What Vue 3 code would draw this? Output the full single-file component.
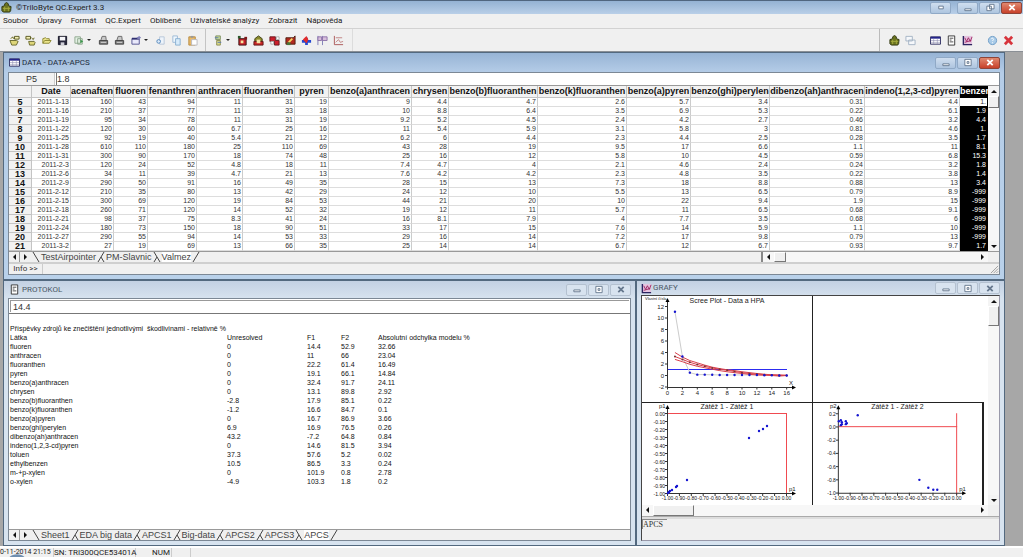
<script setup>
import { ref } from 'vue'

const menu = ['Soubor', 'Úpravy', 'Formát', 'QC.Expert', 'Oblíbené', 'Uživatelské analýzy', 'Zobrazit', 'Nápověda']

const icons = {
  bell: '<path d="M6 0.5 8 2v2l3 1-.5 4.500-1 1.500h-7L1 9.500 1 5l3-1V2z" fill="#6b7420" stroke="#2c320c"/><path d="M4 5v5M8 5v5M2 7h8" stroke="#a6ac3e"/>',
  open1: '<path d="M1 6h7l2 1-2 4H3z" fill="#ded67a" stroke="#66662c"/><path d="M2 4l2-2 1 2M6 1.500h5v3H6z" fill="#f3efb4" stroke="#55551c"/>',
  open2: '<path d="M4 7h6l1 1-1 3H5z" fill="#ded67a" stroke="#66662c"/><path d="M1 1.500h5v3H1zM7 3l2 2 1-2" fill="#f3efb4" stroke="#55551c"/>',
  open3: '<path d="M2 9V4l3-1 1 1h3v2M2 9l2-3h7L9 9z" fill="#ece58c" stroke="#8a8630"/>',
  save: '<path d="M1.500 1.500h9v9h-9z" fill="#26263a" stroke="#111122"/><path d="M3 2h6v4H3z" fill="#f5f5f8"/><path d="M4 8h4v3H4z" fill="#d0d0d8"/>',
  exp: '<path d="M1 2h6v7H1zM4 4h5v6H4z" fill="#e3f0e3" stroke="#8ba58b"/><path d="m7 5 3 2-3 2z" fill="#38974a"/>',
  print: '<path d="M3 6 4.500 1.500h4L9 6z" fill="#c8c8c8" stroke="#666"/><path d="M1.500 6h9v4h-9z" fill="#7c7c7c" stroke="#444"/><path d="M3 8h6" stroke="#ddd"/>',
  props: '<path d="M1 4h8v6H1z" fill="#e9e9fb" stroke="#50508e"/><path d="M1 4h8" stroke="#303070" stroke-width="2"/><path d="m6 3 3-2 2 2-3 2z" fill="#8080b8"/>',
  cut: '<path d="M5 2h5v8H5z" fill="#eef4fb" stroke="#b7c6d8"/><circle cx="4" cy="7" r="2" fill="#dbe9f8" stroke="#5588bb"/>',
  copy: '<path d="M2 1h5v7H2z" fill="#eef6fd" stroke="#9db9d5"/><path d="M5 4h5v7H5z" fill="#d7ebfb" stroke="#88aed0"/>',
  paste: '<path d="M2 2h7v9H2z" fill="#e8b968" stroke="#b88a40"/><path d="M4 1h3v2H4z" fill="#999"/><path d="M5 5h6v6H5z" fill="#fff" stroke="#b9b9c0"/>',
  filt: '<path d="M3 1h5v4H3z" fill="#c9dc9a" stroke="#7c8e60"/><path d="M4 6h4v5H4z" fill="#d9d98a" stroke="#8c8e50"/><path d="M2 3h4M5 8h4" stroke="#5875b0"/>',
  r1: '<path d="M1 1h3v3H1z" fill="#2d5a2d"/><path d="M2 4h8v7H2z" fill="#c42027" stroke="#3a1616"/><path d="M4 6h3v3H4z" fill="#f6e7a0"/><path d="M8 2h3v3H8z" fill="#7a1a1a"/>',
  r2: '<path d="m6 1 4 3v3H2V4z" fill="#8c8c2c" stroke="#3d3d10"/><path d="M1 7h10v4H1z" fill="#c92525" stroke="#5c1818"/><path d="M4 5h4v4H4z" fill="#f3e4a8"/>',
  r3: '<path d="M1 2h6v4h4v5H6V7H1z" fill="#cc1f2c" stroke="#66161c"/><path d="M2 7h3v3H2zM8 2h3v3H8z" fill="#fff" stroke="#aaa"/>',
  r4: '<path d="M1 3h8l2-2v9H1z" fill="#b32a20" stroke="#4c2010"/><path d="m4 8 4-4" stroke="#f6d560" stroke-width="2"/><path d="M2 8h4v3H2z" fill="#47743b"/>',
  r5: '<path d="M6 3v8M1 7h10" stroke="#2649d2" stroke-width="3"/><path d="m2 5 4-4 2 4-2 4z" fill="#e12c2c"/>',
  r6: '<path d="M1 1v10M6 1v10" stroke="#7d7db6"/><path d="M1 2h4v4H1zM6 2h5v4H6z" fill="#d7bedb" stroke="#8c72a8"/>',
  r7: '<path d="M1.500 1v9.500H11" fill="none" stroke="#a55"/><path d="m3 8 3-3 2 3 3-1M3 3h7" fill="none" stroke="#c08080"/>',
  casc: '<path d="M1 1.500h7v5H1zM4 5.500h7v5H4z" fill="#f6f8fb" stroke="#a3b2c4"/>',
  sheet: '<path d="M.5 2h11v8H.5z" fill="#fff" stroke="#27275c"/><path d="M1 3h10" stroke="#23238a" stroke-width="2"/><path d="M1 6h10M1 8h10M4 4v6M8 4v6" stroke="#8b8bb0" stroke-width=".6"/>',
  doc: '<path d="M2.500 1h7v10h-7z" fill="#fff" stroke="#333"/><path d="M4 3.500h4M4 5.500h2M4 7.500h4" stroke="#444"/>',
  graph: '<path d="M1 1h10v10H1z" fill="#e5c3df"/><path d="M1.500 1v9.500H11" fill="none" stroke="#2b2560" stroke-width="1.500"/><path d="m3 3 2 4 2-4 2 4 2-5M3 8l7-2" fill="none" stroke="#9c2360"/>',
  help: '<circle cx="6" cy="6" r="4.500" fill="#a9cbe8" stroke="#6f9cc6"/><path d="M4.500 4.500c1-2 3-.5 2.500.5L6 6.500M6 8v1" fill="none" stroke="#fff"/>',
  del: '<path d="m2 2 8 8M10 2l-8 8" stroke="#d7343c" stroke-width="3"/>'
}

const fileTools = [
  { id: 'open1', label: 'Otevřít' }, { id: 'open2', label: 'Přidat' }, { id: 'open3', label: 'Složka' }, { id: 'save', label: 'Uložit' },
  { id: 'exp', label: 'Export', drop: true }, { id: 'print', label: 'Tisk' }, { id: 'print', label: 'Náhled' },
  { id: 'props', label: 'Vlastnosti', drop: true }, { id: 'cut', label: 'Vyjmout' }, { id: 'copy', label: 'Kopírovat' }, { id: 'paste', label: 'Vložit' }
]
const statTools = ['r1', 'r2', 'r3', 'r4', 'r5', 'r6', 'r7']
const winTools = [['bell', 'casc'], ['sheet', 'doc', 'graph'], ['help', 'del']]

const cell = ref('1.8')
const protoCell = ref('14.4')

const columns = [
  ['Date', 39], ['acenaften', 43], ['fluoren', 34], ['fenanthren', 49], ['anthracen', 46], ['fluoranthen', 52], ['pyren', 34],
  ['benzo(a)anthracen', 83], ['chrysen', 37], ['benzo(b)fluoranthen', 89], ['benzo(k)fluoranthen', 89], ['benzo(a)pyren', 64],
  ['benzo(ghi)perylen', 79], ['dibenzo(ah)anthracen', 95], ['indeno(1,2,3-cd)pyren', 95]
]
const rows = `2011-1-13 160 43 94 11 31 19 9 4.4 4.7 2.6 5.7 3.4 0.31 4.4 1.
2011-1-16 210 37 77 11 33 18 10 8.8 6.4 3.5 6.9 5.3 0.22 6.1 1.9
2011-1-19 95 34 78 11 31 19 9.2 5.2 4.5 2.4 4.2 2.7 0.46 3.2 4.4
2011-1-22 120 30 60 6.7 25 16 11 5.4 5.9 3.1 5.8 3 0.81 4.6 1.
2011-1-25 92 19 40 5.4 21 12 6.2 6 4.4 2.3 4.4 2.5 0.28 3.5 1.7
2011-1-28 610 110 180 25 110 69 43 28 19 9.5 17 6.6 1.1 11 8.1
2011-1-31 300 90 170 18 74 48 25 16 12 5.8 10 4.5 0.59 6.8 15.3
2011-2-3 120 24 52 4.8 18 11 7.4 4.7 4 2.1 4.6 2.4 0.24 3.2 1.8
2011-2-6 34 11 39 4.7 21 13 7.6 4.2 4.2 2.3 4.8 3.5 0.22 3.8 1.4
2011-2-9 290 50 91 16 49 35 28 15 13 7.3 18 8.8 0.88 13 3.4
2011-2-12 210 35 80 13 42 29 24 12 10 5.5 13 6.5 0.79 8.9 -999
2011-2-15 300 69 120 19 84 53 44 21 20 10 22 9.4 1.9 15 -999
2011-2-18 260 71 120 14 52 32 19 12 11 5.7 11 6.5 0.68 9.1 -999
2011-2-21 98 37 75 8.3 41 24 16 8.1 7.9 4 7.7 3.5 0.68 6 -999
2011-2-24 180 73 150 18 90 51 33 17 15 7.6 14 5.9 1.1 10 -999
2011-2-27 290 55 94 14 53 33 29 16 14 7.2 17 9.8 0.79 13 -999
2011-3-2 27 19 69 13 66 35 25 14 14 6.7 12 6.7 0.93 9.7 1.7`.split('\n').map(r => r.split(' '))

const dataTabs = ['TestAirpointer', 'PM-Slavnic', 'Valmez']
const protoTabs = ['Sheet1', 'EDA big data', 'APCS1', 'Big-data', 'APCS2', 'APCS3', 'APCS']

const protocol = `fluoren 0 14.4 52.9 32.66
anthracen 0 11 66 23.04
fluoranthen 0 22.2 61.4 16.49
pyren 0 19.1 66.1 14.84
benzo(a)anthracen 0 32.4 91.7 24.11
chrysen 0 13.1 89.8 2.92
benzo(b)fluoranthen -2.8 17.9 85.1 0.22
benzo(k)fluoranthen -1.2 16.6 84.7 0.1
benzo(a)pyren 0 16.7 86.9 3.66
benzo(ghi)perylen 6.9 16.9 76.5 0.26
dibenzo(ah)anthracen 43.2 -7.2 64.8 0.84
indeno(1,2,3-cd)pyren 0 14.6 81.5 3.94
toluen 37.3 57.6 5.2 0.02
ethylbenzen 10.5 86.5 3.3 0.24
m-+p-xylen 0 101.9 0.8 2.78
o-xylen -4.9 103.3 1.8 0.2`.split('\n').map(r => r.split(' '))

const sx = v => 25.5 + v * 7.45
const sy = v => 79.5 - v * 5.75
const line = vals => vals.map((v, i) => `${sx(i + 1)},${sy(v)}`).join(' ')
const eigen = [11.1, 3.3, 0.5, 0.15, 0.15, 0.12, 0.1, 0.1, 0.1, 0.1, 0.08, 0.08, 0.05, 0.05, 0, 0]
const mid = [3.3, 2.8, 2.3, 1.9, 1.6, 1.3, 1.1, 0.9, 0.7, 0.5, 0.35, 0.25, 0.15, 0.1, 0.02, 0]
const upper = [4, 3.2, 2.6, 2.2, 1.8, 1.45, 1.2, 1, 0.85, 0.65, 0.5, 0.35, 0.22, 0.12, 0.1, 0.05]
const lower = [2.8, 2.4, 1.95, 1.6, 1.35, 1.1, 0.85, 0.65, 0.5, 0.35, 0.2, 0.1, 0.05, 0, -0.1, 0]
const screeY = [12, 10, 8, 6, 4, 2, 0, -2]
const screeX = [0, 2, 4, 6, 8, 10, 12, 14, 16]
const tenths = ['-1.00', '-0.90', '-0.80', '-0.70', '-0.60', '-0.50', '-0.40', '-0.30', '-0.20', '-0.10', '0.00']
const fifths = ['0.2', '0.0', '-0.2', '-0.4', '-0.6', '-0.8', '-1.0']
const load1 = [[45, 77], [107, 35], [117, 28], [121, 26], [125, 23], [35, 83], [34, 84], [30, 87], [28, 88], [27, 89], [26, 90]]
const load2 = [[45, 12], [26, 18], [28, 17], [29, 19], [29, 21], [28, 22], [33, 18], [34, 20], [33, 21], [107, 77], [116, 85], [121, 87], [125, 87]]
</script>

<template>
  <div class="app">
    <header class="titlebar main-title">
      <svg class="ico" viewBox="0 0 12 12" v-html="icons.bell"></svg>
      <h1>©TriloByte QC.Expert 3.3</h1>
      <div class="winbtns">
        <button class="wb extra" aria-label="Přepnout"><svg viewBox="0 0 20 10"><path d="M7.500 3.500h5v3h-5z" /></svg></button>
        <button class="wb" aria-label="Minimalizovat"><svg viewBox="0 0 20 10"><path d="M6.500 6.500h7v2h-7z" /></svg></button>
        <button class="wb" aria-label="Obnovit"><svg viewBox="0 0 20 10"><path d="M9.500 1.500h5v5h-5zM6.500 3.500h5v5h-5z" /></svg></button>
        <button class="wb close" aria-label="Zavřít"><svg viewBox="0 0 20 10"><path class="x" d="m7 2 6 6m0-6-6 6" /></svg></button>
      </div>
    </header>
    <nav class="menu">
      <button v-for="m in menu" :key="m">{{ m }}</button>
    </nav>
    <div class="toolbar">
      <div class="group files">
        <button v-for="t in fileTools" :key="t.label" :aria-label="t.label" :class="{ drop: t.drop }">
          <svg class="ico" viewBox="0 0 12 12" v-html="icons[t.id]"></svg><i v-if="t.drop"></i>
        </button>
      </div>
      <div class="group stats">
        <button class="drop" aria-label="Filtr"><svg class="ico" viewBox="0 0 12 12" v-html="icons.filt"></svg><i></i></button>
        <button v-for="t in statTools" :key="t" :aria-label="t"><svg class="ico" viewBox="0 0 12 12" v-html="icons[t]"></svg></button>
      </div>
      <div class="group wins">
        <span v-for="g in winTools" :key="g[0]">
          <button v-for="t in g" :key="t" :aria-label="t"><svg class="ico" viewBox="0 0 12 12" v-html="icons[t]"></svg></button>
        </span>
      </div>
    </div>

    <main class="desktop">
      <section class="win active data">
        <div class="titlebar">
          <svg class="ico" viewBox="0 0 12 12" v-html="icons.sheet"></svg>
          <h2>DATA - DATA-APCS</h2>
          <div class="winbtns">
            <button class="wb" aria-label="Minimalizovat"><svg viewBox="0 0 20 10"><path d="M6.500 6.500h7v2h-7z" /></svg></button>
            <button class="wb" aria-label="Maximalizovat"><svg viewBox="0 0 20 10"><path d="M6.500 1.500h7v7h-7zM9 4h2v2H9z" /></svg></button>
            <button class="wb close" aria-label="Zavřít"><svg viewBox="0 0 20 10"><path class="x" d="m7 2 6 6m0-6-6 6" /></svg></button>
          </div>
        </div>
        <div class="client">
          <div class="formula"><label for="cell">P5</label><input id="cell" v-model="cell"></div>
          <div class="sheet">
            <div class="grid">
              <table>
                <colgroup><col class="num"><col v-for="c in columns" :key="c[0]" :style="{ width: c[1] + 'px' }"><col></colgroup>
                <thead><tr><th></th><th v-for="c in columns" :key="c[0]">{{ c[0] }}</th><th class="sel">benzen</th></tr></thead>
                <tbody>
                  <tr v-for="(r, i) in rows" :key="i">
                    <th>{{ i + 5 }}</th>
                    <td v-for="(v, j) in r" :key="j" :class="{ sel: j === 15, cur: j === 15 && i === 0 }">{{ v }}</td>
                  </tr>
                </tbody>
              </table>
            </div>
            <div class="vbar"><button class="up" aria-label="Nahoru"></button><span class="thumb"></span><button class="down" aria-label="Dolů"></button></div>
          </div>
          <div class="tabrow">
            <div class="tabs">
              <button class="arr left" aria-label="Předchozí"></button><button class="arr right" aria-label="Další"></button>
              <svg class="sep" viewBox="0 0 10 10"><path d="m2 0 6 10" /></svg>
              <template v-for="(t, i) in dataTabs" :key="t">
                <button class="tab" :class="{ on: i === 2 }">{{ t }}</button>
                <svg class="sep" viewBox="0 0 10 10"><path :d="i === 2 ? 'M8 0 2 10' : i === 1 ? 'm2 0 6 10M5 5 2 10' : 'M8 0 2 10M5 5l3 5'" /></svg>
              </template>
            </div>
            <div class="hbar"><button class="arr left" aria-label="Vlevo"></button><span class="thumb"></span><button class="arr right" aria-label="Vpravo"></button></div>
            <span class="corner"></span>
          </div>
          <footer class="info"><button>Info &gt;&gt;</button><svg viewBox="0 0 10 10"><path d="M1 9 9 1M4 9l5-5M7 9l2-2" /></svg></footer>
        </div>
      </section>

      <div class="lower">
        <section class="win proto">
          <div class="titlebar">
            <svg class="ico" viewBox="0 0 12 12" v-html="icons.doc"></svg>
            <h2>PROTOKOL</h2>
            <div class="winbtns">
              <button class="wb" aria-label="Minimalizovat"><svg viewBox="0 0 20 10"><path d="M6.500 5.500h7v2h-7z" /></svg></button>
              <button class="wb" aria-label="Maximalizovat"><svg viewBox="0 0 20 10"><path d="M6.500 1.500h7v7h-7zM9 4h2v2H9z" /></svg></button>
              <button class="wb" aria-label="Zavřít"><svg viewBox="0 0 20 10"><path class="x" d="m7 2 6 6m0-6-6 6" /></svg></button>
            </div>
          </div>
          <div class="client">
            <div class="pinput"><input v-model="protoCell" aria-label="Hodnota buňky"></div>
            <div class="doc">
              <table>
                <caption>Příspěvky zdrojů ke znečištění jednotlivými&nbsp; škodlivinami - relativně %</caption>
                <colgroup><col class="c1"><col class="c2"><col class="c3"><col class="c4"><col></colgroup>
                <thead><tr><th>Látka</th><th>Unresolved</th><th>F1</th><th>F2</th><th>Absolutní odchylka modelu %</th></tr></thead>
                <tbody><tr v-for="r in protocol" :key="r[0]"><td v-for="(v, i) in r" :key="i">{{ v }}</td></tr></tbody>
              </table>
            </div>
            <div class="tabrow">
              <div class="tabs">
                <button class="arr left" aria-label="Předchozí"></button><button class="arr right" aria-label="Další"></button>
                <svg class="sep" viewBox="0 0 10 10"><path d="m2 0 6 10" /></svg>
                <template v-for="(t, i) in protoTabs" :key="t">
                  <button class="tab" :class="{ on: i === 6 }">{{ t }}</button>
                  <svg class="sep" viewBox="0 0 10 10"><path :d="i === 6 ? 'M8 0 2 10' : i === 5 ? 'm2 0 6 10M5 5 2 10' : 'M8 0 2 10M5 5l3 5'" /></svg>
                </template>
              </div>
            </div>
          </div>
        </section>

        <section class="win graphs">
          <div class="titlebar">
            <svg class="ico" viewBox="0 0 12 12" v-html="icons.graph"></svg>
            <h2>GRAFY</h2>
            <div class="winbtns">
              <button class="wb" aria-label="Minimalizovat"><svg viewBox="0 0 20 10"><path d="M6.500 5.500h7v2h-7z" /></svg></button>
              <button class="wb" aria-label="Maximalizovat"><svg viewBox="0 0 20 10"><path d="M6.500 1.500h7v7h-7zM9 4h2v2H9z" /></svg></button>
              <button class="wb" aria-label="Zavřít"><svg viewBox="0 0 20 10"><path class="x" d="m7 2 6 6m0-6-6 6" /></svg></button>
            </div>
          </div>
          <div class="client">
            <div class="gview">
              <div class="plots">
                <svg class="plot first" viewBox="0 0 170 106">
                  <text class="pt" x="85" y="7">Scree Plot - Data a HPA</text>
                  <text class="tiny" x="3" y="4">Vlastní čísla</text>
                  <path class="ax" d="M25.500 4v87.500H152" /><path d="m25.500 2-2 4h4zM154 91.500l-4-2v4z" />
                  <text class="lab" x="147" y="89">X</text>
                  <g v-for="v in screeY" :key="'y' + v"><path class="ax" :d="`M23 ${sy(v)}h2.500`" /><text class="lab e" x="22" :y="sy(v) + 2">{{ v }}</text></g>
                  <g v-for="v in screeX" :key="'x' + v"><path class="ax" :d="`M${sx(v)} 91v2.500`" /><text class="lab m" :x="sx(v)" y="99">{{ v }}</text></g>
                  <path class="blue" d="M26 73.500h119" />
                  <polyline class="gray" :points="line(eigen)" />
                  <polyline class="red" :points="line(upper)" /><polyline class="red" :points="line(mid)" /><polyline class="red" :points="line(lower)" />
                  <circle v-for="(v, i) in mid" :key="'m' + i" class="dk" :cx="sx(i + 1)" :cy="sy(v)" r="1" />
                  <circle v-for="(v, i) in eigen" :key="'e' + i" class="pb" :cx="sx(i + 1)" :cy="sy(v)" r="1.200" />
                </svg>
                <span></span>
                <svg class="plot" viewBox="0 0 170 102">
                  <text class="pt" x="85" y="6">Zátěž 1 - Zátěž 1</text>
                  <text class="lab" x="17" y="5">p1</text><text class="lab" x="147" y="88">p1</text>
                  <path class="ax" d="M25.500 4v86.500H152" /><path d="m25.500 2-2 4h4zM154 90.500l-4-2v4z" />
                  <path class="redl" d="M26 10.500h119" /><path class="redl" d="M144.500 10v82" />
                  <g v-for="(v, i) in tenths" :key="v">
                    <path class="ax" :d="`M23 ${90.5 - i * 8}h2.500M${25.5 + i * 11.9} 90v3`" />
                    <text class="small e" x="23" :y="92.5 - i * 8">{{ v }}</text><text class="small m" :x="25.5 + i * 11.9" y="97">{{ v }}</text>
                  </g>
                  <circle v-for="(p, i) in load1" :key="i" class="pb" :cx="p[0]" :cy="p[1]" r="1.200" />
                </svg>
                <svg class="plot last" viewBox="0 0 170 102">
                  <text class="pt" x="85" y="6">Zátěž 1 - Zátěž 2</text>
                  <text class="lab" x="17" y="5">p2</text><text class="lab" x="147" y="88">p1</text>
                  <path class="ax" d="M25.500 4v86.500H152" /><path d="m25.500 2-2 4h4zM154 90.500l-4-2v4z" />
                  <path class="redl" d="M26 23.500h119" /><path class="redl" d="M144.500 10v82" />
                  <g v-for="(v, i) in fifths" :key="v"><path class="ax" :d="`M23 ${10.5 + i * 13.3}h2.500`" /><text class="small e" x="23" :y="12.5 + i * 13.3">{{ v }}</text></g>
                  <g v-for="(v, i) in tenths" :key="v"><path class="ax" :d="`M${25.5 + i * 11.9} 90v3`" /><text class="small m" :x="25.5 + i * 11.9" y="97">{{ v }}</text></g>
                  <circle v-for="(p, i) in load2" :key="i" class="pb" :cx="p[0]" :cy="p[1]" r="1.200" />
                </svg>
              </div>
              <div class="vbar"><button class="up" aria-label="Nahoru"></button><span class="thumb tall"></span><button class="down" aria-label="Dolů"></button></div>
            </div>
            <div class="hbar wide"><button class="arr left" aria-label="Vlevo"></button><span class="thumb"></span><button class="arr right" aria-label="Vpravo"></button><span class="corner"></span></div>
            <div class="glist"><span>APCS</span></div>
          </div>
        </section>
      </div>
    </main>

    <footer class="status">
      <span class="s1">0-11-2014 21:15</span><span class="s2">SN: TRI300QCE53401A</span><span class="s3">NUM</span><span class="s4"></span>
      <svg class="orb" viewBox="0 0 20 4"><path d="M0 4C5-1 15-1 20 4z" /></svg>
    </footer>
  </div>
</template>

<style>
body { background: #f0f0f0; }
</style>

<style scoped>
* { box-sizing: border-box; }
.app {
  --ui: Roboto, "Open Sans", sans-serif;
  --sans: "Liberation Sans", Arial, sans-serif;
  display: flex; flex-direction: column; min-height: 100vh; overflow: hidden;
  font: 8px/10px var(--ui); color: #222; background: #f0f0f0;
}
button { border: 0; padding: 0; background: none; font: inherit; color: inherit; display: flex; align-items: center; justify-content: center; }
input { border: 0; outline: 0; padding: 0; font: inherit; color: inherit; min-width: 0; background: #fff; }
h1, h2 { margin: 0; font: inherit; white-space: nowrap; }
.ico { width: 11px; height: 11px; flex: none; }
svg { display: block; }

.titlebar { display: flex; align-items: center; }
.main-title { height: 14px; border-top: 1px solid #50667f; padding: 0 1px; gap: 4px; background: linear-gradient(#94b2d3, #b9cfe8); }
.winbtns { margin-left: auto; display: flex; gap: 1px; }
.wb { width: 21px; height: 12px; border: 1px solid #90a9c6; border-radius: 2px; background: linear-gradient(#cfdeef, #aec5df); }
.wb svg { width: 18px; height: 9px; }
.wb path { fill: #fff; stroke: #62758c; }
.wb .x { stroke: #66788e; stroke-width: 2; }
.wb.extra { margin-right: 5px; }
.wb.close { background: linear-gradient(#e0886f, #c8412a); border-color: #8e4438; }
.wb.close .x { stroke: #fff; }

.menu { display: flex; gap: 9px; height: 14px; padding-left: 3px; }
.toolbar { display: flex; height: 24px; border-top: 1px solid #d2d2d2; border-bottom: 1px solid #8a8f95; }
.group { display: flex; align-items: center; }
.group button { width: 16px; height: 16px; }
.group .drop { width: 25px; gap: 2px; }
.group i { border: 2px solid transparent; border-top-color: #222; border-bottom: 0; }
.files { width: 206px; padding-left: 6px; border-right: 1px solid #c4c4c4; }
.stats { width: 147px; padding-left: 3px; border-right: 1px solid #dcdcdc; }
.wins { margin-left: auto; padding: 0 7px 0 6px; border-left: 1px solid #bbb; gap: 9px; }
.wins span { display: flex; }

.desktop { flex: 1; display: flex; flex-direction: column; padding: 0 18px 0 3px; background: #a7a7a7; }
.win { display: flex; flex-direction: column; border: 1px solid #53697f; padding: 0 4px 4px; background: linear-gradient(#c3d1e3, #d7e3ef 18px); color: #4b5866; min-width: 0; }
.win.active { background: linear-gradient(#97b4d5, #b5cde8 20px, #b9d1ea); color: #1d2b3c; }
.win .titlebar { height: 19px; gap: 2px; padding-left: 1px; }
.proto .titlebar { height: 17px; }
.graphs .titlebar { height: 14px; padding-left: 0; gap: 1px; }
.win:not(.active) .wb { background: #d8e3ef; border-color: #b4c1d0; }
.client { flex: 1; display: flex; flex-direction: column; background: #fff; border: 1px solid #7c8895; color: #333; min-width: 0; }
.graphs .client { border-color: #444; border-right-color: #99a; border-bottom-color: #99a; }
.formula { display: flex; height: 13px; border-bottom: 1px solid #999; font: 9px/13px var(--sans); }
.formula label { width: 46px; text-align: center; background: #f2f2f2; border-right: 1px solid #ccc; margin-right: 1px; }
.formula input { flex: 1; border-left: 1px solid #777; }
.sheet { display: flex; }
.grid { flex: 1; min-width: 0; overflow: hidden; }
table { border-collapse: separate; border-spacing: 0; table-layout: fixed; }
.grid table { width: 100%; }
.num { width: 23px; }
.grid th { font: bold 9px/11px var(--sans); padding: 0; height: 12px; background: #f2f2f2; color: #111; border-right: 1px solid #c4c4c4; border-bottom: 1px solid #c4c4c4; white-space: nowrap; overflow: hidden; }
.grid tbody th { height: 9px; line-height: 8px; }
.grid td { height: 9px; font: 7px/8px var(--sans); text-align: right; padding: 0 1px; border-right: 1px solid #ccc; border-bottom: 1px solid #ddd; white-space: nowrap; overflow: hidden; }
.grid .sel { background: #000; color: #fff; border-color: #000; }
.grid th.sel { text-align: left; border-right: 0; }
.grid .cur { background: #fff; color: #333; }

.vbar { width: 11px; flex: none; display: flex; flex-direction: column; background: #f7f7f7; }
.vbar button { height: 10px; background: #f4f4f4; }
.vbar button::before, .arr::before { content: ""; border: 3px solid transparent; }
.up::before { border-bottom-color: #111 !important; border-top: 0 !important; }
.down { margin-top: auto; }
.down::before { border-top-color: #111 !important; border-bottom: 0 !important; }
.thumb { background: #f0f0f0; border: 1px solid #fff; border-right-color: #777; border-bottom-color: #777; height: 12px; }
.thumb.tall { height: 20px; }
.arr { width: 11px; height: 10px; flex: none; }
.arr.left::before { border-right-color: #111; border-left: 0; }
.arr.right::before { border-left-color: #111; border-right: 0; }

.tabrow { display: flex; height: 11px; border-top: 1px solid #999; background: #f0f0f0; font: 9px/10px var(--sans); }
.tabs { display: flex; flex: 1; }
.tabs .arr.left { border-right: 1px solid #999; }
.sep { width: 10px; height: 10px; flex: none; }
.sep path, .info path { fill: none; stroke: #444; }
.tab { color: #444; white-space: nowrap; }
.tab.on { background: #fff; }
.hbar { display: flex; width: 227px; background: #f7f7f7; border-left: 2px solid #888; }
.hbar .thumb { width: 12px; height: 10px; }
.hbar .arr.right { margin-left: auto; }
.corner { width: 11px; background: #f0f0f0; }
.info { display: flex; justify-content: space-between; height: 12px; border-top: 2px solid #cfcfcf; background: #f0f0f0; }
.info button { width: 34px; border-right: 1px solid #ccc; }
.info svg { width: 9px; height: 9px; align-self: flex-end; }
.info path { stroke: #999; }

.lower { flex: 1; display: grid; grid-template-columns: 633fr 369fr; }
.pinput { height: 15px; padding: 1px; border-bottom: 1px solid #777; }
.pinput input { display: block; width: 100%; height: 12px; padding-left: 2px; border: 1px solid #999; border-width: 1px 0 0 1px; font: 9px/11px var(--sans); }
.doc { flex: 1; padding: 10px 0 0; overflow: hidden; }
.doc table { width: 100%; font: 7px/9px var(--sans); color: #111; text-align: left; }
.doc caption { text-align: left; white-space: nowrap; padding-left: 1px; }
.doc th { font-weight: normal; }
.doc th, .doc td { padding: 0 0 0 1px; height: 9px; white-space: nowrap; }
.c1 { width: 217px; } .c2 { width: 80px; } .c3 { width: 34px; } .c4 { width: 37px; }

.gview { display: flex; }
.plots { flex: 1; min-width: 0; overflow: hidden; display: grid; grid-template-columns: 171px 171px; justify-content: start; }
.plot { width: 171px; height: 103px; border: 1px solid #222; border-width: 1px 1px 0 0; }
.plot.first { height: 106px; border-top: 0; }
.plot.last { border-right-width: 2px; }
.plot text { font-family: var(--sans); fill: #222; }
.plot .pt { font-size: 7px; text-anchor: middle; }
.plot .lab { font-size: 6px; }
.plot .small { font-size: 5px; fill: #111; }
.plot .tiny { font-size: 4px; }
.plot .e { text-anchor: end; }
.plot .m { text-anchor: middle; }
.ax { stroke: #333; fill: none; stroke-width: 1; }
.blue { stroke: #2c2cf0; }
.gray { stroke: #ccc; fill: none; }
.red { stroke: #d8404c; fill: none; stroke-width: 1; }
.redl { stroke: #f04a50; fill: none; }
.pb { fill: #1515d0; }
.dk { fill: #7b3030; }
.hbar.wide { width: auto; height: 12px; border-left: 0; border-bottom: 1px solid #aaa; }
.wide .thumb { width: 41px; height: 11px; }
.glist { flex: 1; background: #f0f0f0; border-top: 2px solid #ddd; font: 8px/9px "Liberation Serif", serif; }
.glist span { display: block; width: 25px; border: 1px solid #888; border-width: 1px 0 0 1px; }

.status { position: relative; display: flex; height: 11px; border-top: 2px solid #fff; line-height: 9px; white-space: nowrap; }
.status span { border-right: 1px solid #ccc; }
.s1 { width: 54px; font-size: 7px; }
.s2 { width: 82px; }
.s3 { width: 36px; padding-left: 16px; }
.s4 { width: 19px; }
.orb { position: absolute; left: 8px; bottom: 0; width: 18px; height: 3px; }
.orb path { fill: #6f8fb0; }
</style>
